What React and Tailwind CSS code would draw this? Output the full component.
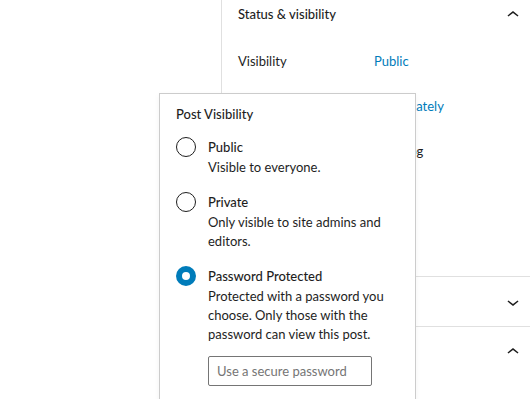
import React from "react";

const ChevronUp = () => (
  <svg width="24" height="24" viewBox="0 0 24 24" className="fill-[#1e1e1e]">
    <path d="M6.5 12.4L12 8l5.5 4.4-.9 1.2L12 10l-4.6 3.6-.9-1.2z" />
  </svg>
);

const ChevronDown = () => (
  <svg width="24" height="24" viewBox="0 0 24 24" className="fill-[#1e1e1e]">
    <path d="M17.5 11.6L12 16l-5.5-4.4.9-1.2L12 14l4.6-3.6.9 1.2z" />
  </svg>
);

const options = [
  { label: "Public", desc: ["Visible to everyone."], checked: false },
  {
    label: "Private",
    desc: ["Only visible to site admins and", "editors."],
    checked: false,
  },
  {
    label: "Password Protected",
    desc: [
      "Protected with a password you",
      "choose. Only those with the",
      "password can view this post.",
    ],
    checked: true,
  },
];

export default function App() {
  return (
    <div className="relative w-[530px] h-[399px] overflow-hidden bg-white text-[13px] text-[#1e1e1e] font-['Lato',sans-serif]">
      {/* Sidebar */}
      <div className="ml-[221px] h-full border-l border-[#e0e0e0]">
        <div className="h-[30px] flex items-center justify-between pl-[16px] pr-[5px]">
          <span className="font-medium">Status &amp; visibility</span>
          <ChevronUp />
        </div>
        <div className="pl-[16px] pt-[22px]">
          <div className="flex items-center h-[20px]">
            <span className="w-[136px]">Visibility</span>
            <span className="text-[#007cba]">Public</span>
          </div>
          <div className="flex items-center h-[20px] mt-[25px]">
            <span className="w-[136px]">Publish</span>
            <span className="text-[#007cba]">Immediately</span>
          </div>
          <div className="flex items-center h-[20px] mt-[25px] gap-[17px]">
            <span className="w-[16px] h-[16px] border border-[#1e1e1e] rounded-[2px]" />
            <span>Stick to the top of the blog</span>
          </div>
          <div className="flex items-center h-[20px] mt-[16px] gap-[8px]">
            <span className="w-[16px] h-[16px] border border-[#1e1e1e] rounded-[2px]" />
            <span>Pending review</span>
          </div>
        </div>
        <div className="mt-[78px] border-t border-[#e0e0e0] h-[50px] flex items-center justify-end pr-[5px]">
          <ChevronDown />
        </div>
        <div className="border-t border-[#e0e0e0] h-[50px] flex items-center justify-end pr-[5px]">
          <ChevronUp />
        </div>
      </div>

      {/* Visibility popover */}
      <div className="absolute left-[159px] top-[93px] w-[257px] h-[320px] bg-white border border-[#cccccc] shadow-[0_2px_6px_rgba(0,0,0,0.05)] px-[16px] pt-[10px]">
        <div className="leading-[20px] font-medium text-[#1e1e1e]">Post Visibility</div>
        <div className="mt-[13px] flex flex-col gap-[15px]">
          {options.map((o) => (
            <div key={o.label} className="flex gap-[12px]">
              <span
                className={
                  o.checked
                    ? "w-[20px] h-[20px] rounded-full border-[6px] border-[#007cba] bg-white shrink-0"
                    : "w-[20px] h-[20px] rounded-full border border-[#1e1e1e] bg-white shrink-0"
                }
              />
              <div>
                <div className="leading-[20px] font-medium">{o.label}</div>
                <div className="mt-[1px] leading-[19px] whitespace-nowrap">
                  {o.desc.map((l, i) => (
                    <div key={i}>{l}</div>
                  ))}
                </div>
              </div>
            </div>
          ))}
        </div>
        <input
          type="text"
          placeholder="Use a secure password"
          className="mt-[12px] ml-[32px] w-[164px] h-[30px] border border-[#757575] rounded-[2px] px-[8px] text-[13px] placeholder:text-[#757575] outline-none"
        />
      </div>
    </div>
  );
}
